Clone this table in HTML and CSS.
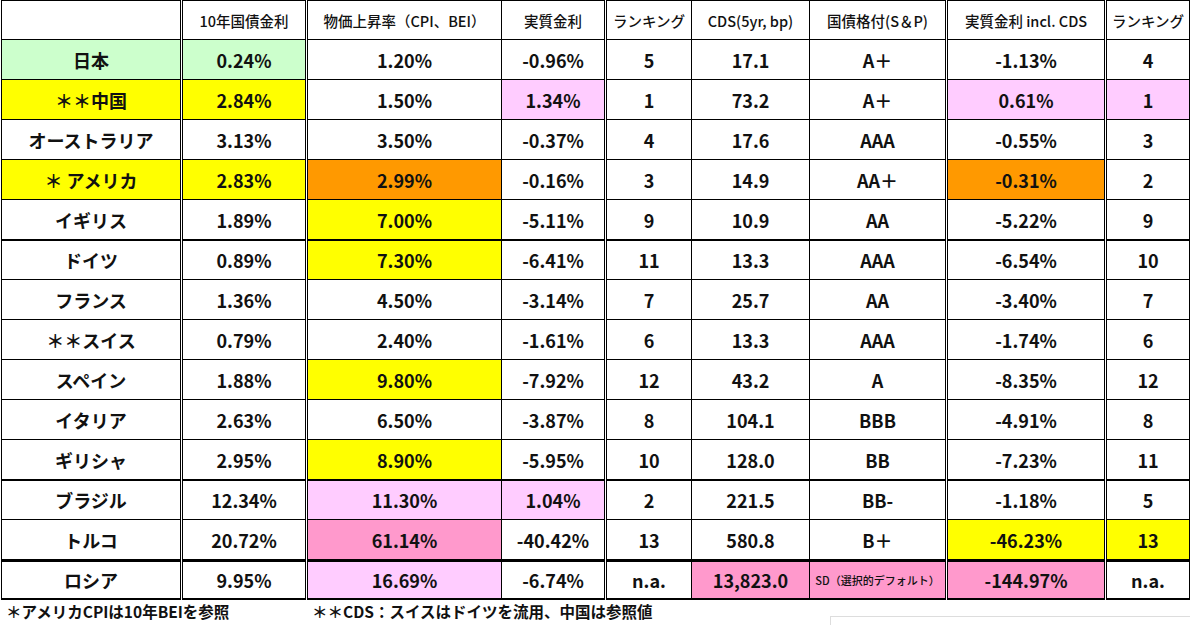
FILE: index.html
```html
<!DOCTYPE html>
<html lang="ja">
<head>
<meta charset="utf-8">
<title>実質金利ランキング</title>
<link rel="stylesheet" href="styles.css">
</head>
<body>
<table class="rates">
  <colgroup>
    <col class="c-country"><col class="c-yield"><col class="c-cpi"><col class="c-real"><col class="c-rank"><col class="c-cds"><col class="c-rating"><col class="c-incl"><col class="c-rank2">
  </colgroup>
  <thead>
    <tr class="head">
      <th class="dbl-r"></th>
      <th class="dbl-r">10年国債金利</th>
      <th>物価上昇率（CPI、BEI）</th>
      <th class="dbl-r">実質金利</th>
      <th>ランキング</th>
      <th>CDS(5yr, bp)</th>
      <th class="dbl-r">国債格付(S＆P)</th>
      <th class="dbl-r">実質金利 incl. CDS</th>
      <th>ランキング</th>
    </tr>
  </thead>
  <tbody>
    <tr>
      <td class="dbl-r green">日本</td><td class="dbl-r green">0.24%</td><td>1.20%</td><td class="dbl-r">-0.96%</td><td>5</td><td>17.1</td><td class="dbl-r">A＋</td><td class="dbl-r">-1.13%</td><td>4</td>
    </tr>
    <tr>
      <td class="dbl-r yellow">＊＊中国</td><td class="dbl-r yellow">2.84%</td><td>1.50%</td><td class="dbl-r lpink">1.34%</td><td>1</td><td>73.2</td><td class="dbl-r">A＋</td><td class="dbl-r lpink">0.61%</td><td class="lpink">1</td>
    </tr>
    <tr>
      <td class="dbl-r">オーストラリア</td><td class="dbl-r">3.13%</td><td>3.50%</td><td class="dbl-r">-0.37%</td><td>4</td><td>17.6</td><td class="dbl-r">AAA</td><td class="dbl-r">-0.55%</td><td>3</td>
    </tr>
    <tr>
      <td class="dbl-r yellow">＊ アメリカ</td><td class="dbl-r yellow">2.83%</td><td class="orange">2.99%</td><td class="dbl-r">-0.16%</td><td>3</td><td>14.9</td><td class="dbl-r">AA＋</td><td class="dbl-r orange">-0.31%</td><td>2</td>
    </tr>
    <tr>
      <td class="dbl-r">イギリス</td><td class="dbl-r">1.89%</td><td class="yellow">7.00%</td><td class="dbl-r">-5.11%</td><td>9</td><td>10.9</td><td class="dbl-r">AA</td><td class="dbl-r">-5.22%</td><td>9</td>
    </tr>
    <tr class="top2">
      <td class="dbl-r">ドイツ</td><td class="dbl-r">0.89%</td><td class="yellow">7.30%</td><td class="dbl-r">-6.41%</td><td>11</td><td>13.3</td><td class="dbl-r">AAA</td><td class="dbl-r">-6.54%</td><td>10</td>
    </tr>
    <tr>
      <td class="dbl-r">フランス</td><td class="dbl-r">1.36%</td><td>4.50%</td><td class="dbl-r">-3.14%</td><td>7</td><td>25.7</td><td class="dbl-r">AA</td><td class="dbl-r">-3.40%</td><td>7</td>
    </tr>
    <tr>
      <td class="dbl-r">＊＊スイス</td><td class="dbl-r">0.79%</td><td>2.40%</td><td class="dbl-r">-1.61%</td><td>6</td><td>13.3</td><td class="dbl-r">AAA</td><td class="dbl-r">-1.74%</td><td>6</td>
    </tr>
    <tr>
      <td class="dbl-r">スペイン</td><td class="dbl-r">1.88%</td><td class="yellow">9.80%</td><td class="dbl-r">-7.92%</td><td>12</td><td>43.2</td><td class="dbl-r">A</td><td class="dbl-r">-8.35%</td><td>12</td>
    </tr>
    <tr>
      <td class="dbl-r">イタリア</td><td class="dbl-r">2.63%</td><td>6.50%</td><td class="dbl-r">-3.87%</td><td>8</td><td>104.1</td><td class="dbl-r">BBB</td><td class="dbl-r">-4.91%</td><td>8</td>
    </tr>
    <tr>
      <td class="dbl-r">ギリシャ</td><td class="dbl-r">2.95%</td><td class="yellow">8.90%</td><td class="dbl-r">-5.95%</td><td>10</td><td>128.0</td><td class="dbl-r">BB</td><td class="dbl-r">-7.23%</td><td>11</td>
    </tr>
    <tr class="top2">
      <td class="dbl-r">ブラジル</td><td class="dbl-r">12.34%</td><td class="lpink">11.30%</td><td class="dbl-r lpink">1.04%</td><td>2</td><td>221.5</td><td class="dbl-r">BB-</td><td class="dbl-r">-1.18%</td><td>5</td>
    </tr>
    <tr>
      <td class="dbl-r">トルコ</td><td class="dbl-r">20.72%</td><td class="dpink">61.14%</td><td class="dbl-r">-40.42%</td><td>13</td><td>580.8</td><td class="dbl-r">B＋</td><td class="dbl-r yellow">-46.23%</td><td class="yellow">13</td>
    </tr>
    <tr class="last">
      <td class="dbl-r">ロシア</td><td class="dbl-r">9.95%</td><td class="lpink">16.69%</td><td class="dbl-r">-6.74%</td><td>n.a.</td><td class="dpink">13,823.0</td><td class="dbl-r dpink small">SD（選択的デフォルト）</td><td class="dbl-r dpink">-144.97%</td><td>n.a.</td>
    </tr>
  </tbody>
</table>
<div class="notes">
  <p class="note note-first">＊アメリカCPIは10年BEIを参照</p>
  <p class="note">＊＊CDS：スイスはドイツを流用、中国は参照値</p>
</div>
<div class="ghost-box"></div>
</body>
</html>
```

FILE: styles.css
```css
html, body {
  margin: 0;
  padding: 0;
  background: #ffffff;
}

body {
  font-family: "Noto Sans CJK JP", "Noto Sans", sans-serif;
  color: #111111;
  overflow: hidden;
}

.rates {
  border-collapse: collapse;
  table-layout: fixed;
  width: 1188px;
  margin: 0 0 0 1px;
}

.c-country { width: 180px; }
.c-yield { width: 125px; }
.c-cpi { width: 195px; }
.c-real { width: 104px; }
.c-rank { width: 86px; }
.c-cds { width: 118px; }
.c-rating { width: 137px; }
.c-incl { width: 159px; }
.c-rank2 { width: 84px; }

.rates th,
.rates td {
  border: 1px solid #000;
  padding: 0;
  text-align: center;
  vertical-align: middle;
  height: 39px;
  white-space: nowrap;
  overflow: hidden;
}

.rates th {
  height: 38px;
  font-size: 14.5px;
  font-weight: 500;
  letter-spacing: 0;
}

.rates td {
  font-size: 18px;
  font-weight: 700;
}

.rates .dbl-r {
  border-right: 3px double #000;
}

.rates tr.top2 td {
  border-top: 2px solid #000;
  height: 38px;
}

.rates tr.last td {
  border-top: 3px solid #000;
  border-bottom: 2px solid #000;
  height: 36px;
}

.rates td.small {
  font-size: 11px;
  font-weight: 500;
}

.green { background: #ccffcc; }
.yellow { background: #ffff00; }
.lpink { background: #ffccff; }
.orange { background: #ff9900; }
.dpink { background: #ff99cc; }

.notes {
  display: flex;
  margin: 0;
}

.note {
  margin: 0;
  font-size: 15.5px;
  font-weight: 700;
  line-height: 22px;
}

.note-first {
  width: 306px;
  padding-left: 6px;
}

.ghost-box {
  margin: -6px 0 0 830px;
  height: 30px;
  border: 1px solid #dddddd;
  border-right: none;
}
```
